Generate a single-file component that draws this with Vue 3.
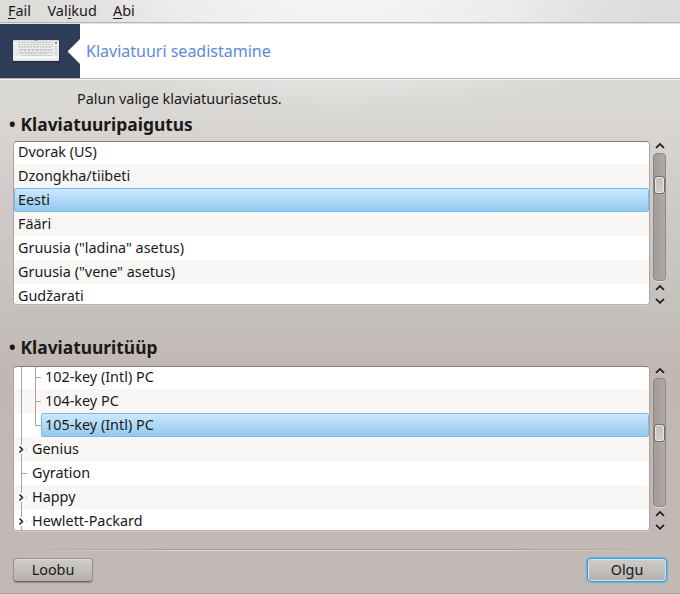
<script setup>
import { ref } from 'vue'

const menus = [
  { pre: '', key: 'F', post: 'ail', cls: 'm-file' },
  { pre: 'Val', key: 'i', post: 'kud', cls: 'm-options' },
  { pre: '', key: 'A', post: 'bi', cls: 'm-help' },
]
const layouts = ['Dvorak (US)', 'Dzongkha/tiibeti', 'Eesti', 'Fääri', 'Gruusia ("ladina" asetus)', 'Gruusia ("vene" asetus)', 'Gudžarati']
const models = [
  { name: '102-key (Intl) PC', level: 2 },
  { name: '104-key PC', level: 2 },
  { name: '105-key (Intl) PC', level: 2, last: true },
  { name: 'Genius', level: 1, expandable: true },
  { name: 'Gyration', level: 1 },
  { name: 'Happy', level: 1, expandable: true },
  { name: 'Hewlett-Packard', level: 1, expandable: true },
]
const layout = ref('Eesti')
const model = ref('105-key (Intl) PC')
</script>

<template>
  <div class="window">
    <nav class="menubar">
      <span v-for="m in menus" :key="m.cls" :class="m.cls">{{ m.pre }}<u>{{ m.key }}</u>{{ m.post }}</span>
    </nav>
    <header class="banner">
      <div class="badge">
        <svg class="keyboard" width="48" height="24" viewBox="0 0 48 24">
          <defs>
            <linearGradient id="kb" x1="0" y1="0" x2="0" y2="1">
              <stop offset="0" stop-color="#d4d4d4" />
              <stop offset=".12" stop-color="#f1f1f1" />
              <stop offset=".72" stop-color="#e6e6e6" />
              <stop offset=".82" stop-color="#fbfbfb" />
              <stop offset="1" stop-color="#d6d6d6" />
            </linearGradient>
          </defs>
          <rect x="0.5" y="1" width="47" height="22.5" rx="1" fill="#1c263a" opacity=".6" />
          <rect x="1" y="1" width="46" height="21" rx="1" fill="url(#kb)" />
          <g fill="none" stroke="#bcbcbc" stroke-width="1">
            <path d="M6 3.5H41M6 7.5H41M7 10.5H41M7 13.5H41M9 16.5H40" stroke="#d0d0d0" />
            <path d="M6 5.5H41" stroke-dasharray="2 1" />
            <path d="M7 8.5H40" stroke-dasharray="1 2" />
            <path d="M8 11.5H40" stroke-dasharray="2 2" />
            <path d="M10 14.5H37" stroke-dasharray="1 2" />
            <path d="M44 6V16" stroke="#cfcfcf" />
          </g>
          <rect x="22" y="1" width="4" height="1" fill="#aaa" />
          <rect x="43" y="3" width="2" height="2" fill="#e0685f" />
        </svg>
        <svg class="notch" width="12" height="25" viewBox="0 0 12 25"><path d="M12 0V25L0 13V12Z" fill="#fff" /></svg>
      </div>
      <h1>Klaviatuuri seadistamine</h1>
    </header>
    <main>
      <p class="intro">Palun valige klaviatuuriasetus.</p>
      <h2 class="h-layout"><i>•</i>Klaviatuuripaigutus</h2>
      <section class="pane">
        <div class="list">
          <div v-for="l in layouts" :key="l" class="row">
            <span class="item" :class="{ selected: l === layout }" @click="layout = l"><b :class="{ long: l.length > 18 }">{{ l }}</b></span>
          </div>
        </div>
        <div class="scroll">
          <svg class="up" width="10" height="6" viewBox="0 0 10 6"><path class="halo" d="M1 6L5 2L9 6" /><path d="M1 5L5 1L9 5" /></svg>
          <div class="groove first"><div class="handle"></div></div>
          <svg class="up2" width="10" height="6" viewBox="0 0 10 6"><path class="halo" d="M1 6L5 2L9 6" /><path d="M1 5L5 1L9 5" /></svg>
          <svg class="down" width="10" height="7" viewBox="0 0 10 7"><path class="halo" d="M1 2L5 6L9 2" /><path d="M1 1L5 5L9 1" /></svg>
        </div>
      </section>
      <h2 class="h-model"><i>•</i>Klaviatuuritüüp</h2>
      <section class="pane tall">
        <div class="list">
          <div v-for="m in models" :key="m.name" class="row">
            <svg class="branch" :class="'level' + m.level" :width="m.level === 2 ? 27 : 14" height="24" shape-rendering="crispEdges">
              <path v-if="m.expandable" d="M7.5 0V8M7.5 17V24M12 12.5H13" />
              <path v-else-if="m.level === 1" d="M7.5 0V24M8 12.5H13" />
              <path v-else :d="'M7.5 0V24M21.5 0V' + (m.last ? 13 : 24) + 'M22 12.5H27'" />
              <path v-if="m.expandable" class="arrow" d="M5.5 9.5L8.5 12.5L5.5 15.5" shape-rendering="auto" />
            </svg>
            <span class="item tree" :class="{ selected: m.name === model }" @click="model = m.name"><b>{{ m.name }}</b></span>
          </div>
        </div>
        <div class="scroll">
          <svg class="up" width="10" height="6" viewBox="0 0 10 6"><path class="halo" d="M1 6L5 2L9 6" /><path d="M1 5L5 1L9 5" /></svg>
          <div class="groove second"><div class="handle"></div></div>
          <svg class="up2" width="10" height="6" viewBox="0 0 10 6"><path class="halo" d="M1 6L5 2L9 6" /><path d="M1 5L5 1L9 5" /></svg>
          <svg class="down" width="10" height="7" viewBox="0 0 10 7"><path class="halo" d="M1 2L5 6L9 2" /><path d="M1 1L5 5L9 1" /></svg>
        </div>
      </section>
    </main>
    <div class="rule"></div>
    <footer>
      <button>Loobu</button>
      <button class="default">Olgu</button>
    </footer>
    <div class="bottom"></div>
  </div>
</template>

<style>
body { margin: 0; overflow: hidden; }
</style>

<style scoped>
* { box-sizing: border-box; }
.window {
  width: 680px; height: 595px; display: flex; flex-direction: column;
  font-family: "Noto Sans", sans-serif; font-size: 14.4px; color: #1b1918;
  background:
    radial-gradient(ellipse 320px 115px at 340px 0, rgba(255,255,255,.72) 0, rgba(255,255,255,.5) 50%, rgba(255,255,255,.15) 80%, transparent),
    linear-gradient(#dedcda 0, #dad8d5 100px, #cfcac7 210px, #c5c0bc 310px, #c1b8b4 370px, #c2b8b5 100%);
}
.menubar { height: 24px; flex: none; display: flex; padding-left: 8px; line-height: 22px; border-bottom: 1px solid #e5e3e1; box-shadow: inset 0 -1px #bab4b0; }
.menubar span { flex: none; white-space: nowrap; }
.m-file { width: 39.5px; }
.m-options { width: 65.5px; }
u { text-decoration-thickness: 1px; text-underline-offset: 2px; text-decoration-skip-ink: none; }
.banner { height: 54px; flex: none; background: #fff; display: flex; align-items: center; }
.badge { width: 80px; height: 54px; background: #303d59; display: flex; align-items: center; justify-content: space-between; padding-left: 12px; }
h1 { margin: 0 0 0 6px; font-weight: 400; font-size: 16px; color: #5c8adb; line-height: 54px; }
main { display: flex; flex-direction: column; border-top: 1px solid #b9b4b0; box-shadow: inset 0 1px #f4f3f2; height: 471px; flex: none; }
.intro { margin: 10px 0 0 77px; height: 20px; line-height: 20px; }
h2 { margin: 0; font-size: 17.4px; line-height: 24px; height: 24px; display: flex; padding-left: 9px; }
h2 i { font-style: normal; width: 11.5px; }
.h-layout { margin-top: 3px; }
.h-model { margin-top: 30px; }
.pane { display: flex; margin: 5px 0 0 13px; height: 164px; flex: none; gap: 3px; }
.pane.tall { height: 165px; margin-top: 7px; }
.list { width: 637px; background: #fff; border: 1px solid #aaa5a2; border-top-color: #827d7b; border-bottom-color: #b6b0ad; border-radius: 4px; overflow: hidden; box-shadow: 0 1px rgba(255,255,255,.25); }
.row { height: 24px; display: flex; }
.row:first-child { margin-top: -2px; }
.row:nth-child(even) { background: #f8f7f6; }
.item { flex: 1; height: 24px; padding-left: 4px; line-height: 23px; border: 0 solid transparent; border-radius: 3px; white-space: pre; }
.item b { font-weight: 400; display: inline-block; }
.item.selected { background: linear-gradient(#cfeaff, #92c7ee); box-shadow: inset 0 0 0 1px #7fb9e3; }
.branch { flex: none; }
.branch path { fill: none; stroke: #a7a4a2; }
.branch .arrow { stroke: #252220; stroke-width: 1.5; }
.scroll { width: 13px; display: flex; flex-direction: column; align-items: center; padding-top: 2px; }
.scroll svg { flex: none; fill: none; stroke: #282523; stroke-width: 1.8; overflow: visible; }
.scroll .halo { stroke: #e3dfdc; }
.groove { width: 13px; height: 128px; margin: 4px 0; flex: none; border: 1px solid #8c8785; border-radius: 4px; background: linear-gradient(90deg, #a29c99, #b0aaa7); box-shadow: 0 1px #dedad7; }
.groove.first { padding-top: 22px; }
.groove.second { padding-top: 45px; height: 129px; }
.handle { width: 11px; height: 18px; border: 1px solid #716d6b; border-radius: 3px; background: linear-gradient(#c5c0bd, #d0ccca); box-shadow: inset 0 0 0 1px #e8e5e3; }
.down { margin-top: 7px; }
.rule { height: 2px; flex: none; margin: 0 13px; background: linear-gradient(#a39b97 50%, #dad5d2 50%); mask-image: linear-gradient(90deg, transparent, #000 25%, #000 75%, transparent); }
footer { display: flex; justify-content: space-between; padding: 7px 13px 0; height: 42px; flex: none; }
button { font: inherit; color: inherit; width: 80px; height: 24px; padding: 0; line-height: 22px; border: 1px solid #979290; border-bottom-color: #6f6a68; border-radius: 4px; background: linear-gradient(#cfccc9, #b5b1ae); box-shadow: inset 0 1px #e0dddb, 0 1px 1px #8c8683; }
button.default { border-color: #3c9bd3; box-shadow: inset 0 0 0 1px #d8e2e8, 0 0 1px 1px #64b4e2; }
.bottom { height: 2px; flex: none; background: linear-gradient(#a8a09c 50%, #dcd8d5 50%); }
</style>
